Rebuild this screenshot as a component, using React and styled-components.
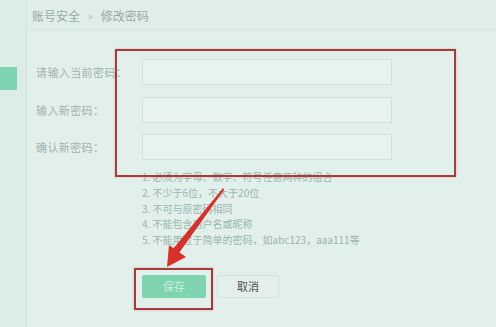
import React from "react";
import styled, { createGlobalStyle } from "styled-components";

const Global = createGlobalStyle`
  html, body {
    margin: 0;
    padding: 0;
    background: #e2f0ec;
  }
  body {
    font-family: "Noto Sans CJK SC", "Noto Sans", sans-serif;
  }
`;

const Page = styled.div`
  position: relative;
  display: flex;
  width: 496px;
  height: 327px;
  overflow: hidden;
  background: #e2f0ec;
`;

const Sidebar = styled.div`
  width: 27px;
  flex-shrink: 0;
  background: #dcede8;
  border-right: 1px solid #d6e4e0;
  padding-top: 67px;
  box-sizing: border-box;
`;

const SideItem = styled.div`
  width: 17px;
  height: 23px;
  background: #7ed4b0;
`;

const Main = styled.div`
  flex: 1;
  display: flex;
  flex-direction: column;
`;

const Header = styled.div`
  height: 30px;
  display: flex;
  align-items: center;
  gap: 8px;
  padding-left: 5px;
  font-size: 12px;
  color: #95aaa6;
  border-bottom: 1px solid #d6e6e2;
  background: #e0eeea;
`;

const Sep = styled.span`
  font-size: 10px;
  color: #a9bcb8;
`;

const Form = styled.div`
  padding: 28px 0 0 9px;
  display: flex;
  flex-direction: column;
`;

const Rows = styled.div`
  display: flex;
  flex-direction: column;
  gap: 11.5px;
`;

const Row = styled.div`
  display: flex;
  align-items: center;
`;

const Label = styled.div`
  width: 106px;
  font-size: 11px;
  letter-spacing: 0.4px;
  color: #a0b3af;
  white-space: nowrap;
`;

const Input = styled.div`
  width: 250px;
  height: 26px;
  box-sizing: border-box;
  border: 1px solid #cfe2dd;
  background: #e6f3ef;
`;

const Hints = styled.ul`
  list-style: none;
  margin: 9px 0 0 106px;
  padding: 0;
  font-size: 10px;
  line-height: 15.8px;
  color: #9ab5af;
`;

const Buttons = styled.div`
  display: flex;
  gap: 11px;
  margin: 27px 0 0 106px;
`;

const Button = styled.div`
  width: ${(p) => (p.primary ? 64 : 62)}px;
  height: 23px;
  box-sizing: border-box;
  display: flex;
  align-items: center;
  justify-content: center;
  font-size: 11px;
  background: ${(p) => (p.primary ? "#7fd3ae" : "#e4efec")};
  color: ${(p) => (p.primary ? "#c9efdf" : "#4a4f4e")};
  border: 1px solid ${(p) => (p.primary ? "#7fd3ae" : "#d3e2de")};
  border-radius: 2px;
`;

const Mark = styled.div`
  position: absolute;
  left: ${(p) => p.x}px;
  top: ${(p) => p.y}px;
  width: ${(p) => p.w}px;
  height: ${(p) => p.h}px;
  box-sizing: border-box;
  border: 2px solid #a93a3c;
  box-shadow: 0 0 2px rgba(230, 140, 140, 0.7);
  pointer-events: none;
`;

const Arrow = styled.svg`
  position: absolute;
  left: 0;
  top: 0;
  pointer-events: none;
`;

const hints = [
  "1. 必须为字母、数字、符号任意两种的组合",
  "2. 不少于6位，不大于20位",
  "3. 不可与原密码相同",
  "4. 不能包含用户名或昵称",
  "5. 不能用过于简单的密码，如abc123，aaa111等",
];

const fields = ["请输入当前密码：", "输入新密码：", "确认新密码："];

export default function App() {
  return (
    <Page>
      <Global />
      <Sidebar>
        <SideItem />
      </Sidebar>
      <Main>
        <Header>
          <span>账号安全</span>
          <Sep>»</Sep>
          <span>修改密码</span>
        </Header>
        <Form>
          <Rows>
            {fields.map((f) => (
              <Row key={f}>
                <Label>{f}</Label>
                <Input />
              </Row>
            ))}
          </Rows>
          <Hints>
            {hints.map((h) => (
              <li key={h}>{h}</li>
            ))}
          </Hints>
          <Buttons>
            <Button primary>保存</Button>
            <Button>取消</Button>
          </Buttons>
        </Form>
      </Main>
      <Mark x={115} y={49} w={341} h={128} />
      <Mark x={134} y={268} w={79} h={42} />
      <Arrow width="496" height="327" viewBox="0 0 496 327">
        <polygon points="223,188 224,190 179,253 173,249" fill="#d8312b" />
        <polygon points="167,267 169,245 186,257" fill="#d8312b" />
      </Arrow>
    </Page>
  );
}
